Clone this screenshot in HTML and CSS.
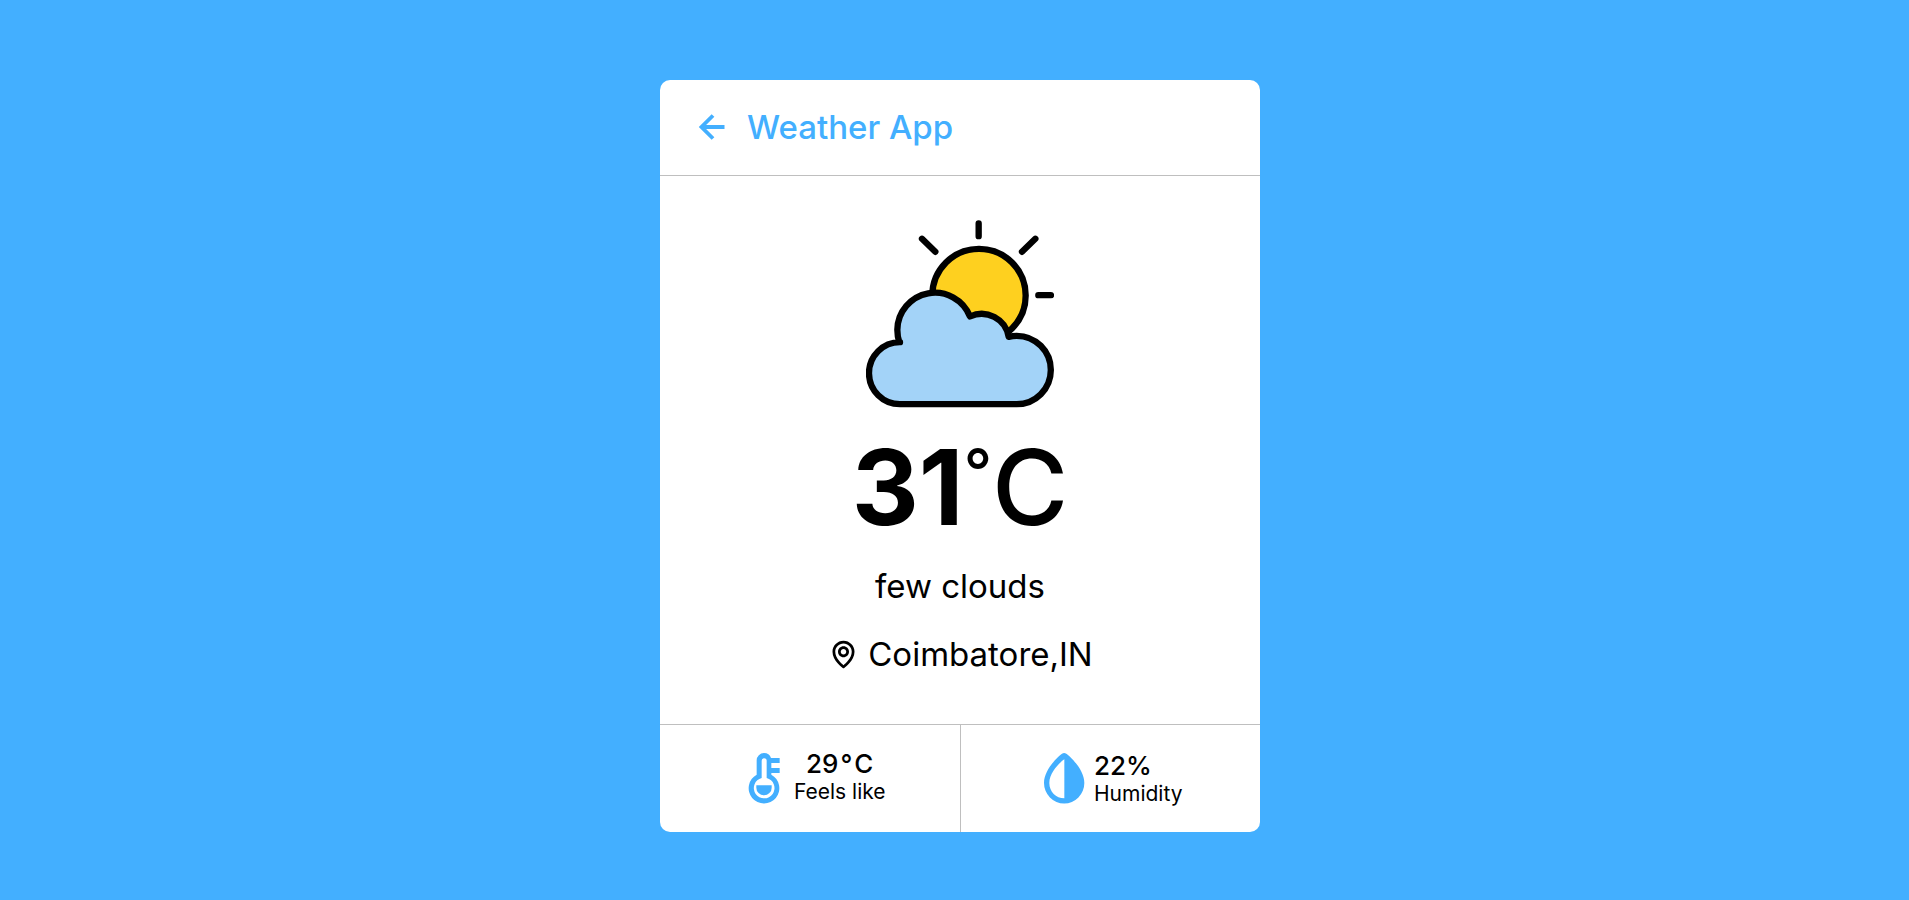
FILE: index.html
```html
<!DOCTYPE html>
<html lang="en">
<head>
<meta charset="utf-8">
<meta name="viewport" content="width=device-width, initial-scale=1">
<title>Weather App</title>
<link rel="stylesheet" href="styles.css">
</head>
<body>
<main class="card">
  <header class="header">
    <button class="back" type="button" aria-label="Back">
      <svg class="back-icon" viewBox="0 0 24 24"><path d="M12.707 17.293 8.414 13H18v-2H8.414l4.293-4.293-1.414-1.414L4.586 12l6.707 6.707z"/></svg>
    </button>
    <h1 class="title">Weather App</h1>
  </header>
  <section class="weather">
    <svg class="sky" viewBox="48 33 564 561" aria-hidden="true">
      <g stroke="#000" stroke-width="19" stroke-linecap="round" stroke-linejoin="round">
        <circle cx="387" cy="258" r="140" fill="#fed01f"/>
        <path fill="#a3d3f8" d="M150 398A93 93 0 0 0 57 492A93 93 0 0 0 150 584H500A102 102 0 0 0 500 379Q488 379 476 382A82 82 0 0 0 360 321A113 113 0 0 0 142 361Q142 380 148 398Z"/>
        <path fill="none" d="M386 42V80M216 88L256 127M556 88L516 127M565 257H603"/>
      </g>
    </svg>
    <div class="temp"><span class="number">31</span><span class="degree">°</span><span class="unit">C</span></div>
    <div class="summary">few clouds</div>
    <div class="place">
      <svg class="pin" viewBox="0 0 24 24" aria-hidden="true"><path d="M12 14c2.206 0 4-1.794 4-4s-1.794-4-4-4-4 1.794-4 4 1.794 4 4 4zm0-6c1.103 0 2 .897 2 2s-.897 2-2 2-2-.897-2-2 .897-2 2-2z"/><path d="M11.42 21.814a.998.998 0 0 0 1.16 0C12.884 21.599 20.029 16.44 20 10c0-4.411-3.589-8-8-8S4 5.589 4 9.995c-.029 6.445 7.116 11.604 7.42 11.819zM12 4c3.309 0 6 2.691 6 6 .021 4.438-4.388 8.423-6 9.73-1.611-1.308-6.021-5.294-6-9.735 0-3.304 2.691-5.995 6-5.995z"/></svg>
      <span>Coimbatore,IN</span>
    </div>
  </section>
  <footer class="details">
    <div class="detail">
      <svg class="detail-icon" viewBox="10 101 180 180" aria-hidden="true">
        <path fill-rule="evenodd" d="M100 116A22 22 0 0 0 78 138V181A46 46 0 1 0 122 181V176H147V161H122V146H147V131H121A22 22 0 0 0 100 116ZM93 139A7 7 0 0 1 108 139V191A31 31 0 1 1 93 191Z"/>
        <path d="M77 213H123V220A23 23 0 0 1 77 220Z"/>
      </svg>
      <div class="reading feels">
        <div class="value">29<span class="small-degree">°</span>C</div>
        <div class="label">Feels like</div>
      </div>
    </div>
    <div class="detail">
      <svg class="detail-icon" viewBox="10 101 180 180" aria-hidden="true">
        <path fill-rule="evenodd" d="M94 118Q100 114 107 118C116 124 161 164 161 206A60 61 0 0 1 40 206C40 164 85 124 94 118ZM101 135C89 143 56 174 56 206C56 232 76 252 101 252Z"/>
      </svg>
      <div class="reading humidity">
        <div class="value">22%</div>
        <div class="label">Humidity</div>
      </div>
    </div>
  </footer>
</main>
</body>
</html>
```
FILE: styles.css
```css
* {
  box-sizing: border-box;
  margin: 0;
}

body {
  min-height: 100vh;
  padding: 80px 16px 68px;
  display: flex;
  align-items: flex-start;
  justify-content: center;
  background: #43afff;
  color: #000;
  font-family: Inter, "Liberation Sans", sans-serif;
}

.card {
  width: 100%;
  max-width: 600px;
  margin-left: 11px;
  background: #fff;
  border-radius: 10px;
}

.header {
  display: flex;
  align-items: center;
  gap: 11px;
  padding: 23px 30px 24px;
  border-bottom: 1px solid #bfbfbf;
  color: #43afff;
}

.back {
  display: flex;
  padding: 0;
  border: 0;
  background: none;
  color: inherit;
  cursor: pointer;
}

.back-icon {
  width: 46px;
  height: 46px;
  fill: currentColor;
}

.title {
  font-size: 33px;
  line-height: 48px;
  font-weight: 500;
}

.weather {
  display: flex;
  flex-direction: column;
  align-items: center;
  padding: 44px 24px 46px;
}

.sky {
  width: 188px;
  height: 188px;
}

.temp {
  display: flex;
  align-items: baseline;
  margin-top: 17px;
  font-size: 104px;
  line-height: 124px;
  font-weight: 500;
}

.number {
  font-weight: 700;
}

.degree {
  align-self: flex-start;
  font-size: 62px;
  line-height: 92px;
}

.summary,
.place {
  font-size: 33px;
  line-height: 48px;
}

.summary {
  margin-top: 13px;
}

.place {
  display: flex;
  align-items: center;
  gap: 8px;
  margin-top: 20px;
}

.pin {
  width: 33px;
  height: 33px;
}

.details {
  display: flex;
  border-top: 1px solid #bfbfbf;
}

.detail {
  flex: 1;
  display: flex;
  align-items: center;
  justify-content: center;
  padding: 23px 0 24px;
}

.detail + .detail {
  border-left: 1px solid #bfbfbf;
}

.detail-icon {
  width: 60px;
  height: 60px;
  fill: #43afff;
}

.feels {
  text-align: center;
}

.humidity {
  padding: 4px 4px 0 0;
}

.value {
  font-size: 26px;
  line-height: 28px;
  font-weight: 500;
}

.small-degree {
  margin: 0 2px;
}

.label {
  font-size: 21px;
  line-height: 28px;
}
```
